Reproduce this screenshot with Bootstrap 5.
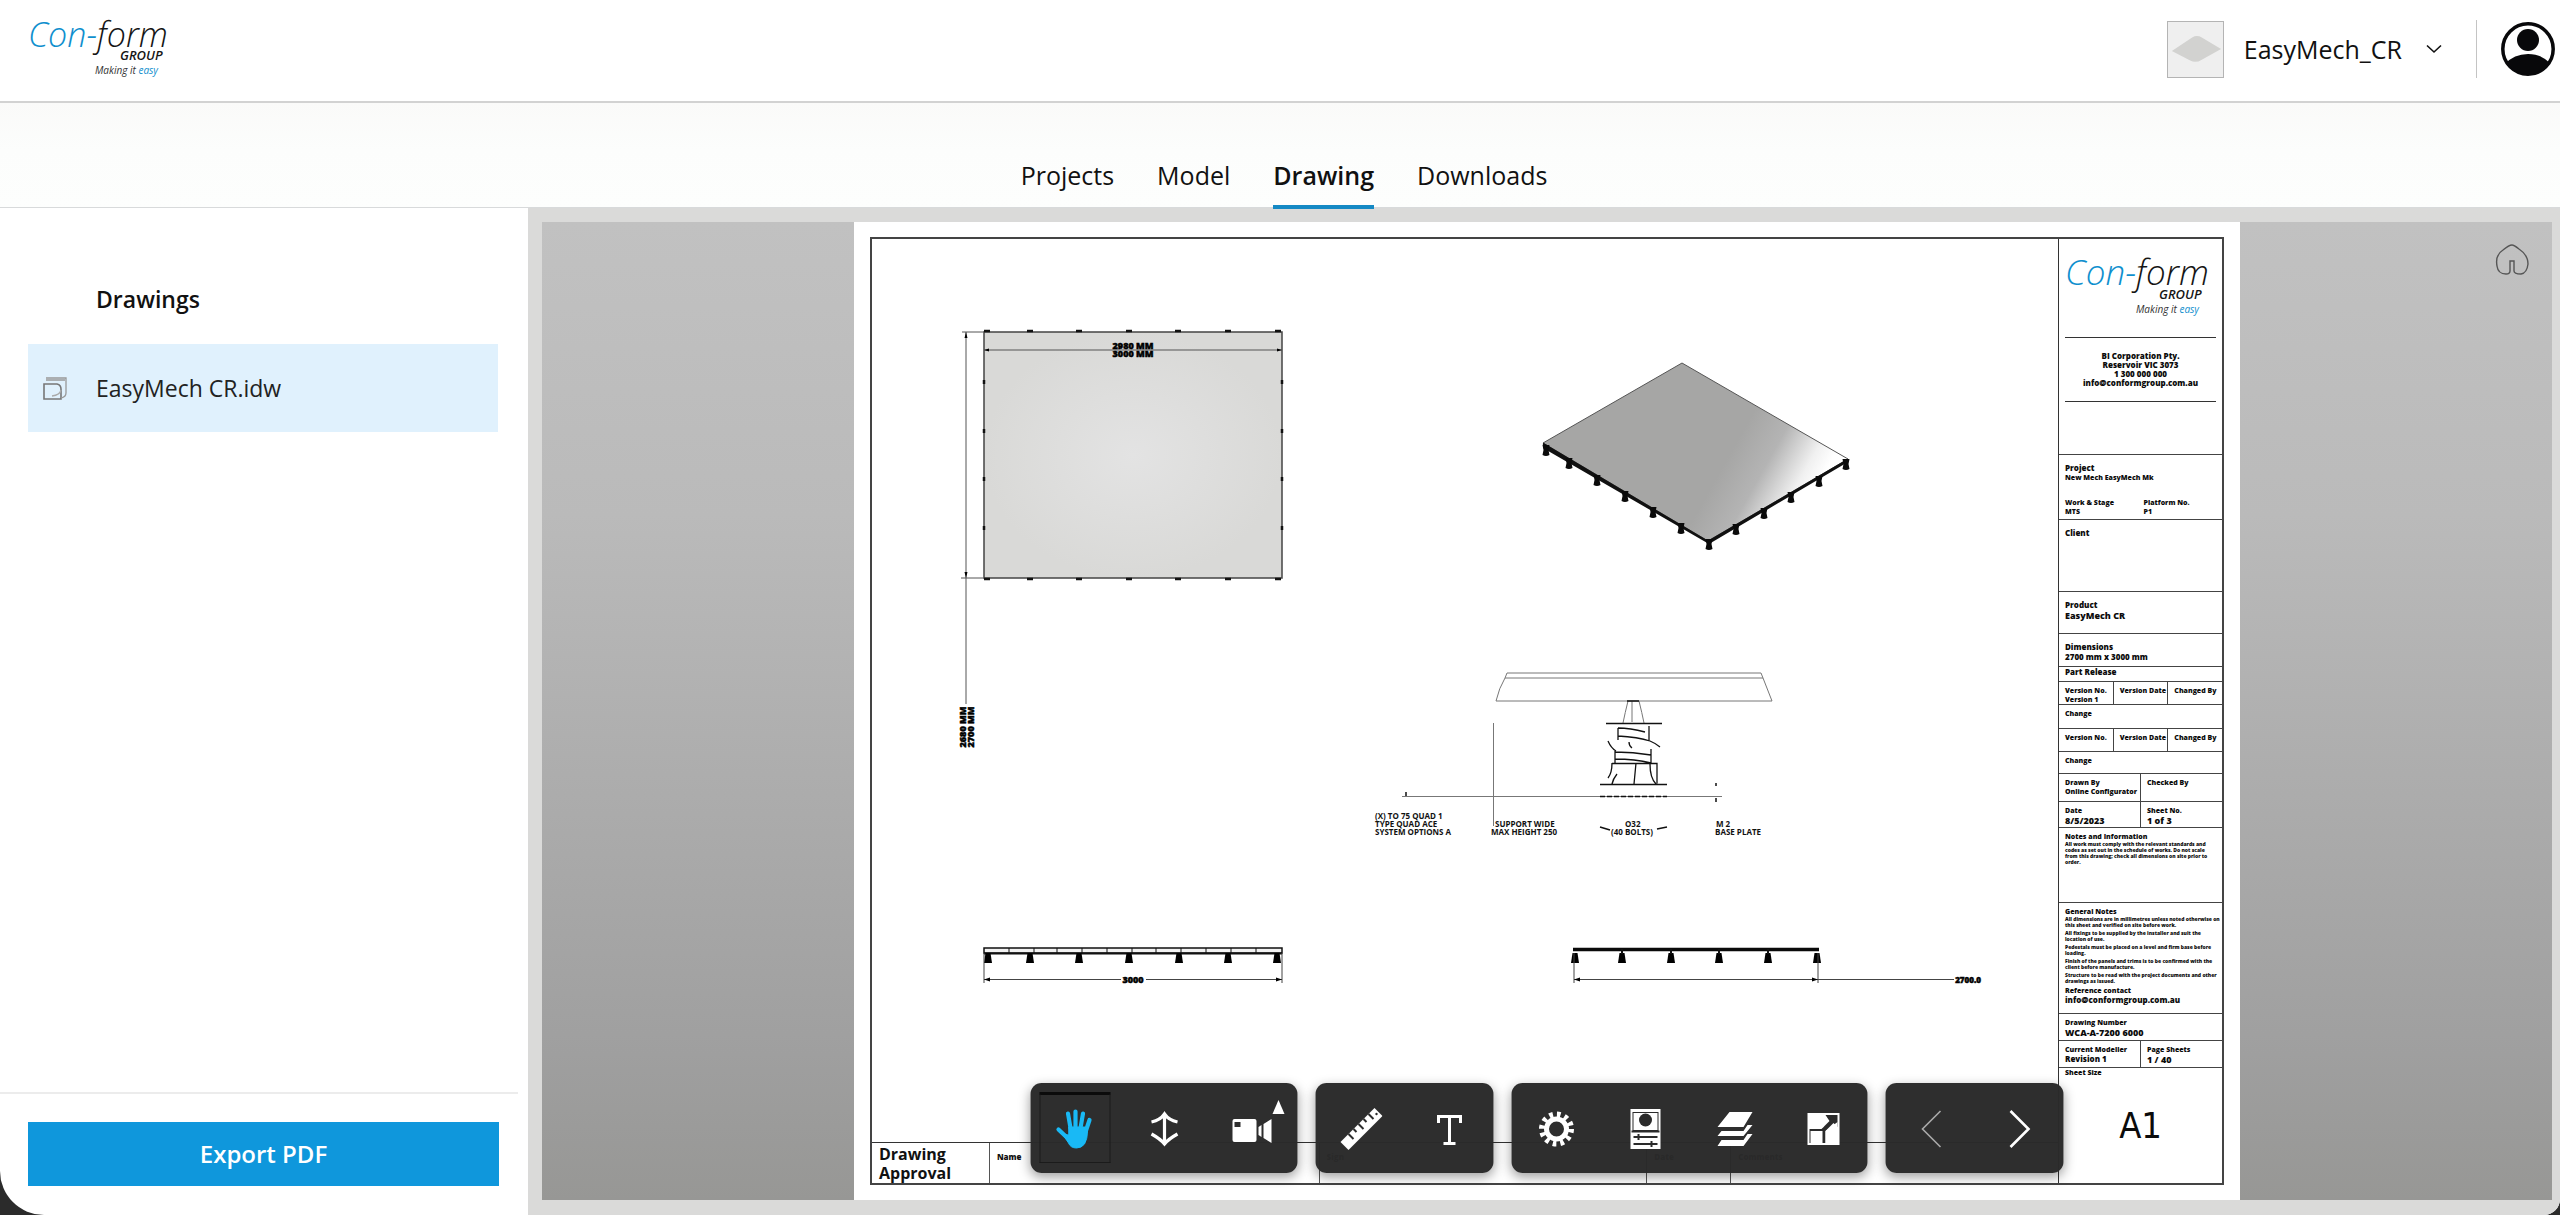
<!DOCTYPE html>
<html lang="en">
<head>
<meta charset="utf-8">
<meta name="viewport" content="width=device-width, initial-scale=1">
<title>EasyMech_CR - Drawing</title>
<link href="https://cdn.jsdelivr.net/npm/bootstrap@5.3.0/dist/css/bootstrap.min.css" rel="stylesheet">
<style>
  body { background: #2b2b2b; color: #111; font-family: "Open Sans", "Noto Sans", sans-serif; font-size: 25px; line-height: 36px; }
  .app-shell { border-radius: 0 0 16px 44px; background: #fff; }
  .top-bar { height: 103px; border-bottom: 2px solid #d2d2d2; padding: 0 5px 3px 28px; }
  .brand-logo { display: block; width: 160px; height: 62px; font-style: italic; overflow: visible; }
  .model-thumb { width: 57px; height: 57px; border: 1px solid #b4b4b4; background: #efefef; }
  .model-btn { border: 0; background: none; padding: 0; color: #111; gap: 20px; }
  .bar-rule { width: 1px; height: 58px; background: #c4c4c4; margin: 0 24px 0 34px; }
  .user-btn { border: 0; background: none; padding: 0; width: 54px; height: 54px; line-height: 0; }
  .tab-bar { height: 105px; background: linear-gradient(#fafaf9, #fcfdfc 45%, #fdfefd); border-bottom: 1px solid #d8dadb; }
  .tab-bar .nav { gap: 43px; padding-left: 8px; }
  .tab-bar .nav-link { color: #111; padding: 0 0 12px; margin-bottom: -2px; border-bottom: 4px solid transparent; }
  .tab-bar .nav-link.active { font-weight: 600; border-color: #1589c4; }
  .side-panel { width: 528px; font-size: 23px; }
  .side-title { font-size: 23px; line-height: 36px; font-weight: 600; margin: 73px 0 27px 96px; }
  .file-row { background: #e0f1fd; color: #222; height: 88px; margin: 0 30px 0 28px; padding-left: 15px; gap: 29px; border: 0; border-radius: 0; font-size: 23px; }
  .side-foot { border-top: 2px solid #ececec; margin-right: 10px; padding: 28px 19px 29px 28px; }
  .export-btn { background: #0f97dc; color: #fff; border-radius: 0; border: 0; height: 64px; font-size: 24px; font-weight: 600; }
  .view-frame { background: #dadad9; padding: 14px 8px 15px 14px; }
  .view-canvas { background: linear-gradient(#c1c1c1, #bababa 30%, #9f9f9f 85%, #979795); }
  .home-btn { top: 22px; right: 23px; width: 34px; height: 32px; padding: 0; border: 0; background: none; line-height: 0; }
  .sheet { aspect-ratio: 1386 / 978; background: #fff; padding: 15px 16px; }
  .sheet-frame { border: 2px solid #444; }
  .plan-area svg { display: block; width: 100%; height: 100%; }
  .approval { height: 41px; border-top: 1px solid #333; font-weight: 700; display: grid; grid-template-columns: 117fr 330fr 328fr 84fr 328fr; }
  .approval > div + div { border-left: 1px solid #555; padding: 9px 7px; font-size: 8px; line-height: 10px; font-weight: 800; }
  .approval h2 { font-size: 16px; line-height: 19px; font-weight: 700; padding-left: 7px; margin: 2px 0 0; }
  .title-block { width: 164px; border-left: 1px solid #333; display: grid; font: 800 7px/9px "Open Sans", sans-serif; color: #0b0b0b;
    grid-template-rows: 215fr 66fr 72fr 42fr 33fr 15fr 23fr 24fr 23fr 22fr 28fr 26fr 75fr 112fr 27fr 27fr 116fr; }
  .title-block > div { min-height: 0; border-top: 1px solid #444; padding-left: 6px; }
  .title-block > div:first-child { border-top: 0; padding-top: 15px; }
  .title-block .split { display: flex; padding-left: 0; }
  .title-block .split > div { flex: 1 1 0; padding-left: 6px; border-left: 1px solid #444; }
  .title-block .split > div:first-child { border-left: 0; }
  .title-block .brand-logo { width: 156px; font-weight: 400; }
  .fine { font-size: 5px; line-height: 6px; padding-right: 5px; }
  .tb-big { font-size: 9px; line-height: 11px; }
  .tb-mid { font-size: 8px; line-height: 10px; }
  .contact { border-top: 1px solid #333; border-bottom: 1px solid #333; margin: 21px 6px 0 0; padding: 13px 0 14px; font-size: 8px; line-height: 9px; }
  .notes { margin: 0; padding: 0; list-style: none; }
  .notes li { margin-bottom: 2px; }
  .sheet-size { font: 36px/42px "DejaVu Sans Condensed", "DejaVu Sans", sans-serif; padding-right: 6px; margin-top: 28px; }
  .tool-dock { left: 50%; bottom: 27px; transform: translateX(-50%); gap: 18px; }
  .tool-set { background: rgba(42,42,42,.98); border-radius: 11px; height: 90px; box-shadow: 0 4px 12px rgba(0,0,0,.38); }
  .tool-btn { width: 89px; height: 90px; border: 0; background: none; padding: 2px 0 0; position: relative; color: #fff; line-height: 0; }
  .tool-btn svg { width: 44px; height: 44px; }
  .tool-btn.picked::before { content: ""; position: absolute; inset: 9px 9px 10px; border: 1px solid #1b1b1b; border-top: 3px solid #0b0b0b; }
  .tool-btn .more { position: absolute; right: 12px; top: 17px; width: 14px; height: 14px; }
</style>
</head>
<body>
<div class="app-shell vh-100 d-flex flex-column overflow-hidden">
  <header class="top-bar d-flex align-items-center justify-content-between flex-shrink-0">
    <a href="#" aria-label="Con-form Group">
      <svg class="brand-logo" viewBox="0 0 160 62"><text x="0" y="29" font-size="34" font-weight="300"><tspan fill="#0f8fce">Con-</tspan><tspan fill="#151515">form</tspan></text><text x="92" y="42" font-size="13" font-weight="600" fill="#151515">GROUP</text><text x="67" y="56" font-size="10" fill="#333">Making it <tspan fill="#0f8fce">easy</tspan></text></svg>
    </a>
    <div class="d-flex align-items-center">
      <button type="button" class="model-btn d-flex align-items-center">
        <svg class="model-thumb" viewBox="0 0 57 57"><path d="M4 30 25 16q5-3 10 0L55 28 35 39q-6 4-12 1z" fill="#d2d2d0"/></svg>
        <span>EasyMech_CR</span>
        <svg class="ms-1" width="16" height="10" viewBox="0 0 16 10" fill="none" stroke="#111" stroke-width="1.6"><path d="M1 1.500 8 8l7-6.500"/></svg>
      </button>
      <div class="bar-rule"></div>
      <button type="button" class="user-btn" aria-label="Account">
        <svg width="54" height="54" viewBox="0 0 54 54"><defs><clipPath id="disc"><circle cx="27" cy="27" r="25"/></clipPath></defs><circle cx="27" cy="27" r="25.200" fill="#fff" stroke="#08080a" stroke-width="3.500"/><circle cx="27" cy="18" r="11" fill="#08080a"/><path clip-path="url(#disc)" d="M4 42q9-10 23-10t23 10v12H4z" fill="#08080a"/></svg>
      </button>
    </div>
  </header>

  <div class="tab-bar d-flex justify-content-center align-items-end flex-shrink-0 position-relative z-1">
    <nav class="nav">
      <a class="nav-link" href="#">Projects</a>
      <a class="nav-link" href="#">Model</a>
      <a class="nav-link active" aria-current="page" href="#">Drawing</a>
      <a class="nav-link" href="#">Downloads</a>
    </nav>
  </div>

  <div class="d-flex flex-grow-1 overflow-hidden">
    <aside class="side-panel d-flex flex-column flex-shrink-0">
      <h1 class="side-title">Drawings</h1>
      <button type="button" class="file-row d-flex align-items-center text-start">
        <svg width="24" height="24" viewBox="0 0 24 24" fill="none" stroke="#777" stroke-width="1.300"><path d="M1 8h13q4 1 4 5v10H1z" stroke-width="1.600"/><path d="M3 2h20v15q0 4-5 5M3 4h19" stroke="#999"/><path d="M9 20q8-1 9-6" stroke="#aaa"/></svg>
        <span>EasyMech CR.idw</span>
      </button>
      <div class="side-foot mt-auto">
        <button type="button" class="export-btn btn w-100">Export PDF</button>
      </div>
    </aside>

    <main class="view-frame flex-grow-1">
      <div class="view-canvas position-relative h-100 d-flex justify-content-center">
        <div class="sheet h-100">
          <div class="sheet-frame h-100 d-flex">
            <section class="d-flex flex-column flex-grow-1">
              <div class="plan-area flex-grow-1 overflow-hidden">
                <svg viewBox="872 239 1186 903" font-family="Open Sans, sans-serif">
                  <defs>
                    <radialGradient id="plate"><stop offset="0" stop-color="#e3e3e3"/><stop offset="1" stop-color="#d9d9d7"/></radialGradient>
                    <linearGradient id="sheen" gradientUnits="userSpaceOnUse" x1="1735" y1="445" x2="1815" y2="490"><stop offset="0" stop-color="#a6a6a5"/><stop offset=".4" stop-color="#b4b4b4"/><stop offset=".8" stop-color="#f0f0f0"/><stop offset="1" stop-color="#fff"/></linearGradient>
                    <path id="leg" d="M-2.500 0h5l1.500 10h-8z"/>
                    <path id="foot" d="M-3.500-10h7l-1 5 1 5q-3.500 2-7 0l1-5z"/>
                  </defs>
                  <!-- plan view -->
                  <rect x="984" y="332" width="298" height="246" fill="url(#plate)" stroke="#444" stroke-width="1.500"/>
                  <path d="M984 350h298M962 332h22M961 578h23M966 332v372" stroke="#555" fill="none"/>
                  <path d="M984 350l5-1.500v3zM1282 350l-5-1.500v3zM966 332l-1.500 6h3zM966 578l-1.500-6h3z"/>
                  <path d="M984 331h6M1027 331h6M1076 331h6M1126 331h6M1175 331h6M1225 331h6M1275 331h6M984 579h6M1027 579h6M1076 579h6M1126 579h6M1175 579h6M1225 579h6M1275 579h6" stroke="#111" stroke-width="2.500"/>
                  <path d="M984 380v4M984 429v4M984 477v4M984 526v4M1282 380v4M1282 429v4M1282 477v4M1282 526v4" stroke="#111" stroke-width="2.500"/>
                  <g font-size="9" font-weight="800" text-anchor="middle" stroke="#000" stroke-width=".5">
                    <text x="1133" y="349">2980 MM</text><text x="1133" y="357">3000 MM</text>
                    <text transform="translate(966 727) rotate(-90)">2680 MM</text><text transform="translate(974 727) rotate(-90)">2700 MM</text>
                  </g>
                  <!-- isometric view -->
                  <path d="M1543 443 1708 541 1848 459v3L1709 544 1543 448z" fill="#111"/>
                  <path d="M1682 363 1848 459 1708 541 1543 443z" fill="url(#sheen)" stroke="#555"/>
                  <path d="M1543 443.500 1708 541.500 1848 459.500" fill="none" stroke="#111" stroke-width="1.500"/>
                  <g fill="#0a0a0a"><use href="#foot" x="1546" y="455"/><use href="#foot" x="1569" y="468"/><use href="#foot" x="1597" y="485"/><use href="#foot" x="1625" y="501"/><use href="#foot" x="1653" y="517"/><use href="#foot" x="1681" y="533"/><use href="#foot" x="1709" y="549"/><use href="#foot" x="1736" y="534"/><use href="#foot" x="1764" y="518"/><use href="#foot" x="1791" y="502"/><use href="#foot" x="1819" y="486"/><use href="#foot" x="1846" y="469"/></g>
                  <!-- pedestal detail -->
                  <g fill="none" stroke="#777"><path d="M1507 673h254l2 5 9 23h-276q3-13 9-23zM1505 678h258"/><path d="M1628 701q-3 12-5 22M1639 701q3 12 5 22M1632 701v21"/><path d="M1402 796.500h320M1493.500 723v103"/></g>
                  <g fill="none" stroke="#111" stroke-width="1.300"><path d="M1606 723.500h56M1627 701h12M1618 728q12 0 27 4M1618 736q20 1 32 5 5 2 10 6M1608 741q3 7 8 10M1615 752q18 0 36 3M1615 759q20 0 36 4M1618 728v12M1649 726v15M1651 749v14M1615 751v12M1629 742q0 4 3 6M1612 763.500h45v20M1636 763l-2 21M1612 763q0 10-4 15M1617 774q-4 5-5 10M1650 764q0 14 6 20M1600 784.500h67"/><path d="M1600 796.500h67" stroke-dasharray="5 2"/></g>
                  <path d="M1406 792v4M1716 783v3M1716 798v4M1600 827l10 3M1667 827l-10 2" stroke="#111" stroke-width="1.500"/>
                  <g font-size="8" font-weight="700" fill="#111">
                    <text x="1375" y="819">(X) TO 75 QUAD 1</text><text x="1375" y="827">TYPE QUAD ACE</text><text x="1375" y="835">SYSTEM OPTIONS A</text>
                    <text x="1495" y="827">SUPPORT WIDE</text><text x="1491" y="835">MAX HEIGHT 250</text>
                    <text x="1625" y="827">O32</text><text x="1611" y="835">(40 BOLTS)</text>
                    <text x="1716" y="827">M 2</text><text x="1715" y="835">BASE PLATE</text>
                  </g>
                  <!-- front elevation -->
                  <rect x="984" y="948" width="298" height="5" fill="#f2f2f2" stroke="#111" stroke-width="1.500"/>
                  <path d="M1009 948v5M1034 948v5M1057 948v5M1082 948v5M1107 948v5M1132 948v5M1156 948v5M1181 948v5M1206 948v5M1231 948v5M1256 948v5" stroke="#111"/>
                  <path d="M984 953.500h298" stroke="#111" stroke-width="2"/>
                  <use href="#leg" x="988" y="953"/><use href="#leg" x="1030" y="953"/><use href="#leg" x="1079" y="953"/><use href="#leg" x="1129" y="953"/><use href="#leg" x="1179" y="953"/><use href="#leg" x="1228" y="953"/><use href="#leg" x="1277" y="953"/>
                  <path d="M984 953v30M1282 953v30M984 979.500h137M1146 979.500h136" stroke="#444" fill="none"/>
                  <path d="M984 979.500l6-2v4zM1282 979.500l-6-2v4z"/>
                  <text x="1133" y="983" font-size="9" font-weight="800" text-anchor="middle" stroke="#000" stroke-width=".5">3000</text>
                  <!-- side elevation -->
                  <path d="M1573 949.500h246" stroke="#0a0a0a" stroke-width="3.500"/>
                  <use href="#leg" x="1575" y="953"/><use href="#leg" x="1622" y="953"/><use href="#leg" x="1671" y="953"/><use href="#leg" x="1719" y="953"/><use href="#leg" x="1768" y="953"/><use href="#leg" x="1817" y="953"/>
                  <path d="M1622 949v5M1671 949v5M1719 949v5M1768 949v5" stroke="#111" stroke-width="2"/>
                  <path d="M1574 953v30M1818 953v30M1574 979.500h380" stroke="#444" fill="none"/>
                  <path d="M1574 979.500l6-2v4zM1818 979.500l-6-2v4z"/>
                  <text x="1968" y="983" font-size="8" font-weight="800" text-anchor="middle" stroke="#000" stroke-width=".5">2700.0</text>
                </svg>
              </div>
              <div class="approval">
                <div><h2>Drawing Approval</h2></div>
                <div>Name</div>
                <div>Sign</div>
                <div>Date</div>
                <div>Comments</div>
              </div>
            </section>
            <section class="title-block flex-shrink-0">
              <div>
                <svg class="brand-logo" viewBox="0 0 156 62"><text x="0" y="31" font-size="35" font-weight="300"><tspan fill="#0f8fce">Con-</tspan><tspan fill="#151515">form</tspan></text><text x="94" y="45" font-size="13" font-weight="600" fill="#151515">GROUP</text><text x="71" y="59" font-size="10" fill="#333">Making it <tspan fill="#0f8fce">easy</tspan></text></svg>
                <div class="contact text-center">BI Corporation Pty.<br>Reservoir VIC 3073<br>1 300 000 000<br>info@conformgroup.com.au</div>
              </div>
              <div class="pt-2">
                <div class="tb-mid">Project</div><div>New Mech EasyMech Mk</div>
                <div class="d-flex pt-3"><div class="w-50">Work &amp; Stage<br>MTS</div><div class="w-50">Platform No.<br>P1</div></div>
              </div>
              <div class="pt-2 tb-mid">Client</div>
              <div class="pt-2"><div class="tb-mid">Product</div><div class="tb-big">EasyMech CR</div></div>
              <div class="pt-2"><div class="tb-mid">Dimensions</div><div class="tb-mid">2700 mm x 3000 mm</div></div>
              <div class="tb-mid">Part Release</div>
              <div class="split"><div class="pt-1">Version No.<br>Version 1</div><div class="pt-1">Version Date</div><div class="pt-1">Changed By</div></div>
              <div class="pt-1">Change</div>
              <div class="split"><div class="pt-1">Version No.</div><div class="pt-1">Version Date</div><div class="pt-1">Changed By</div></div>
              <div class="pt-1">Change</div>
              <div class="split"><div class="pt-1">Drawn By<div class="text-nowrap">Online Configurator</div></div><div class="pt-1">Checked By</div></div>
              <div class="split"><div class="pt-1">Date<div class="tb-big">8/5/2023</div></div><div class="pt-1">Sheet No.<div class="tb-big">1 of 3</div></div></div>
              <div class="pt-1">Notes and Information<div class="fine">All work must comply with the relevant standards and codes as set out in the schedule of works. Do not scale from this drawing; check all dimensions on site prior to order.</div></div>
              <div class="pt-1">General Notes
                <ul class="notes fine">
                  <li>All dimensions are in millimetres unless noted otherwise on this sheet and verified on site before work.</li>
                  <li>All fixings to be supplied by the installer and suit the location of use.</li>
                  <li>Pedestals must be placed on a level and firm base before loading.</li>
                  <li>Finish of the panels and trims is to be confirmed with the client before manufacture.</li>
                  <li>Structure to be read with the project documents and other drawings as issued.</li>
                </ul>
                <div>Reference contact</div><div class="tb-mid">info@conformgroup.com.au</div>
              </div>
              <div class="pt-1">Drawing Number<div class="tb-big">WCA-A-7200 6000</div></div>
              <div class="split"><div class="pt-1">Current Modeller<div class="tb-mid">Revision 1</div></div><div class="pt-1">Page Sheets<div class="tb-big">1 / 40</div></div></div>
              <div>Sheet Size<div class="sheet-size text-center">A1</div></div>
            </section>
          </div>
        </div>

        <button type="button" class="home-btn position-absolute" aria-label="Home">
          <svg width="34" height="32" viewBox="0 0 34 32" fill="none" stroke="#555" stroke-width="1.400"><path d="M17 1Q19 1 24 5q9 6 9 15-1 9-7 10-7 0-7-3V17h-4v10q0 3-4 3-8 0-9-8-2-11 6-16 6-5 9-5z"/></svg>
        </button>

        <div class="tool-dock position-absolute d-flex" role="toolbar" aria-label="Viewer tools">
          <div class="tool-set d-flex">
            <button type="button" class="tool-btn picked" aria-label="Pan"><svg viewBox="0 0 44 44" fill="none" stroke="#19b9f5" stroke-width="4.200" stroke-linecap="round"><path d="M17 21 14.500 6.500M22 20V4.500M27 21 29.500 6.500M32 25 36 13M14 31 5 22.500"/><path d="M15.500 20h16L34 24q0 8-3 13-3 4-8 4-6 0-8-5l-6-9 6 1z" fill="#19b9f5" stroke-width="1"/></svg></button>
            <button type="button" class="tool-btn" aria-label="Zoom"><svg viewBox="0 0 44 44" fill="none" stroke="currentColor" stroke-width="3.200"><path d="M22 6v32M9 15q9-2 13-8 4 6 13 8M9 27q9 5 13 10 4-5 13-10"/></svg></button>
            <button type="button" class="tool-btn" aria-label="Camera"><svg viewBox="0 0 44 44" fill="currentColor"><path fill-rule="evenodd" d="M3 12h20q2 0 2 2v19q0 2-2 2H3q-2 0-2-2V14q0-2 2-2zM3 15v5h6v-5zM27 20l3-2v12l-3-2zM32 17l8-5v24l-8-5z"/></svg><svg class="more" viewBox="0 0 14 14"><path d="M7 0l6 14H1z" fill="#fff"/></svg></button>
          </div>
          <div class="tool-set d-flex">
            <button type="button" class="tool-btn" aria-label="Measure"><svg viewBox="0 0 44 44"><path d="M36 1 44 9 10 43 2 35z" fill="#fff"/><path d="M30 7l5 5M25 12l3 3M20 17l5 5M15 22l3 3M10 27l5 5" stroke="#2b2b2b" stroke-width="2"/><circle cx="38" cy="7" r="1.200" fill="#2b2b2b"/></svg></button>
            <button type="button" class="tool-btn" aria-label="Text"><svg viewBox="0 0 44 44" fill="none" stroke="#fff" stroke-width="3"><path d="M11 16V9.500h22V16M22 10v26" /><path d="M16 36.500h12"/></svg></button>
          </div>
          <div class="tool-set d-flex">
            <button type="button" class="tool-btn" aria-label="Settings"><svg viewBox="0 0 44 44" fill="none" stroke="#fff"><circle cx="22" cy="22" r="10" stroke-width="5"/><circle cx="22" cy="22" r="14.500" stroke-width="6" stroke-dasharray="3.600 3.992"/></svg></button>
            <button type="button" class="tool-btn" aria-label="Properties"><svg viewBox="0 0 44 44"><path d="M7 2h30v40H7z" fill="#fff"/><path d="M9 5h26v20H9z" fill="#2b2b2b"/><path d="M10 6h24v17H10z" fill="#fff"/><circle cx="22" cy="13" r="6.500" fill="#2b2b2b"/><path d="M8 24.500h28" stroke="#2b2b2b" stroke-width="2"/><path d="M10 30h24M10 37h24M15 27v6M28 34v6" stroke="#2b2b2b" stroke-width="2"/></svg></button>
            <button type="button" class="tool-btn" aria-label="Layers"><svg viewBox="0 0 44 44" fill="#fff"><path d="M17 5h23l-9 15H5zM35 18h5l-9 11H5l4-5h22zM35 27h5l-9 12H5l4-6h22z"/></svg></button>
            <button type="button" class="tool-btn" aria-label="Full screen"><svg viewBox="0 0 44 44"><path d="M6 6h32v32H6z" fill="#fff"/><path d="M24 8h12v12l-4-4-8 8v12H8V22h12l8-8z" fill="#2b2b2b"/><path d="M8 8h14v12l-4 2H8zM24 24l12-9v21H24z" fill="#fff"/><path d="M9 24h12v12H9z" fill="#fff"/></svg></button>
          </div>
          <div class="tool-set d-flex">
            <button type="button" class="tool-btn" aria-label="Previous sheet"><svg viewBox="0 0 44 44" fill="none" stroke="#aaa" stroke-width="1.600"><path d="M32 4 14 22l18 18"/></svg></button>
            <button type="button" class="tool-btn" aria-label="Next sheet"><svg viewBox="0 0 44 44" fill="none" stroke="#fff" stroke-width="2.600"><path d="M13 4l18 18-18 18"/></svg></button>
          </div>
        </div>
      </div>
    </main>
  </div>
</div>
<script src="https://cdn.jsdelivr.net/npm/bootstrap@5.3.0/dist/js/bootstrap.bundle.min.js"></script>
</body>
</html>
